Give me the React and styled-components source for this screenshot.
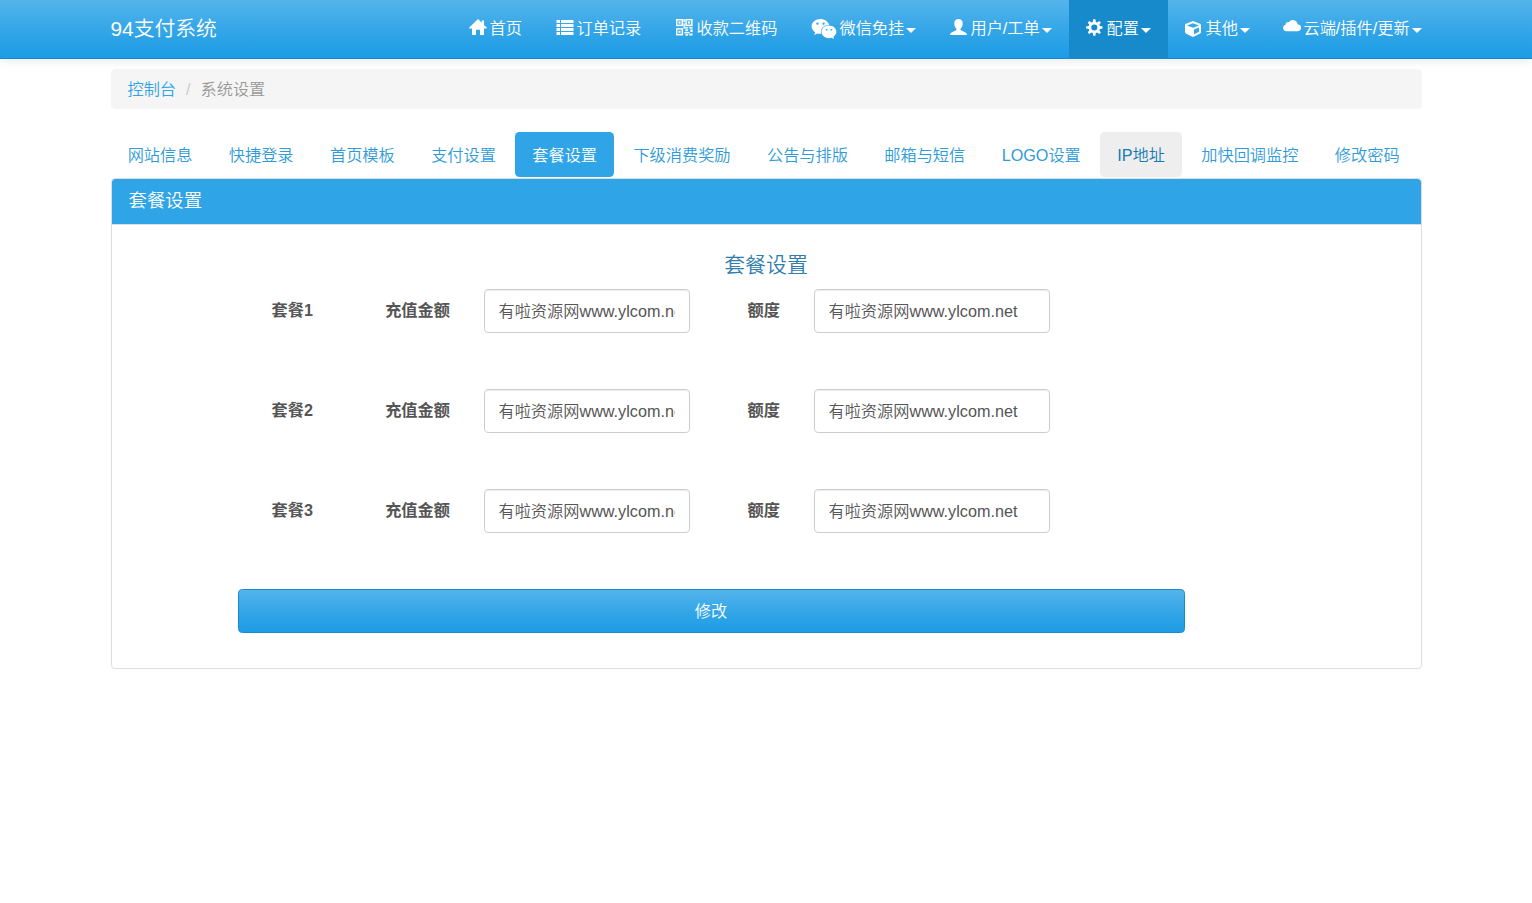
import React, { useState } from 'react';
import styled, { createGlobalStyle } from 'styled-components';
import { FaWeixin, FaCube } from 'react-icons/fa';

const GlobalStyle = createGlobalStyle`
  * {
    box-sizing: border-box;
  }

  body {
    margin: 0;
    background: #fff;
    color: #555;
    font-family: "Liberation Sans", "Noto Sans CJK SC", sans-serif;
    font-size: 16.2px;
    font-weight: 350;
    line-height: 23px;
  }
`;

const Container = styled.div`
  width: 1311px;
  margin: 0 auto;
`;

const Navbar = styled.nav`
  height: 59px;
  border-bottom: 1px solid #178acc;
  background-image: linear-gradient(#54b4eb, #2fa4e7 60%, #1d9ce5);
  box-shadow: 0 1px 10px rgba(0, 0, 0, 0.1);
`;

const NavbarInner = styled(Container)`
  display: flex;
  justify-content: space-between;
  height: 58px;
`;

const Brand = styled.a`
  padding-top: 17px;
  color: #fff;
  font-size: 20.8px;
  white-space: nowrap;
`;

const NavList = styled.ul`
  display: flex;
  margin: 0 -16px 0 0;
  padding: 0;
  list-style: none;
`;

const NavItem = styled.li`
  width: ${props => props.$width}px;
  height: 58px;
  padding: 16px 0 0 17px;
  background-color: ${props => (props.$active ? '#178acc' : 'transparent')};
`;

const NavLink = styled.a`
  display: flex;
  align-items: center;
  height: 24px;
  color: #fff;
  white-space: nowrap;
  cursor: pointer;

  svg {
    flex: none;
    margin-top: ${props => props.$shift}px;
    margin-right: ${props => props.$gap}px;
  }
`;

const Caret = styled.span`
  margin: 4px 0 0 2px;
  border-top: 5px solid #fff;
  border-left: 5px solid transparent;
  border-right: 5px solid transparent;
`;

const Breadcrumb = styled.ol`
  display: flex;
  height: 40px;
  margin: 10px 0 23px;
  padding: 9px 17px;
  border-radius: 4.6px;
  background-color: #f5f5f5;
  color: #999;
  list-style: none;

  a {
    color: #2fa4e7;
  }

  li + li::before {
    content: '/';
    padding: 0 10px;
    color: #ccc;
  }
`;

const Tabs = styled.ul`
  display: flex;
  gap: 2.1px;
  margin: 0;
  padding: 0;
  list-style: none;
`;

const Tab = styled.li`
  height: 45px;
  padding: 12px 17.17px 0;
  border-radius: 4.6px;
  background-color: ${props => (props.$active ? '#2fa4e7' : props.$hovered ? '#eee' : 'transparent')};
  color: ${props => (props.$active ? '#fff' : props.$hovered ? '#157ab5' : '#2f9bd8')};
  white-space: nowrap;
  cursor: pointer;
`;

const Panel = styled.section`
  height: 491px;
  margin-top: 1px;
  border: 1px solid #ddd;
  border-radius: 4.6px;
  box-shadow: 0 1px 1px rgba(0, 0, 0, 0.05);
`;

const PanelHeading = styled.header`
  height: 46px;
  padding: 10px 17px 0;
  border-bottom: 1px solid #ddd;
  border-radius: 3.6px 3.6px 0 0;
  background-color: #2fa4e7;
  color: #fff;
  font-size: 18.4px;
`;

const FormTitle = styled.h4`
  margin: 0;
  padding: 27px 0 12px;
  color: #317eac;
  font-size: 20.9px;
  font-weight: 350;
  line-height: 25px;
  text-align: center;
`;

const Form = styled.form`
  display: flex;
  flex-direction: column;
  gap: 56px;
  width: 947px;
  margin-left: 126px;
`;

const FormRow = styled.div`
  display: grid;
  grid-template-columns: 109px 137px 206px 124px 236px;
  height: 44px;
`;

const Label = styled.label`
  padding: 10px 33.6px 0 0;
  font-weight: 700;
  text-align: right;
  white-space: nowrap;
`;

const Input = styled.input`
  width: 100%;
  height: 44px;
  padding: 0 14px 2px;
  border: 1px solid #ccc;
  border-radius: 4.6px;
  outline: none;
  background: #fff;
  box-shadow: inset 0 1px 1px rgba(0, 0, 0, 0.075);
  color: #555;
  font: inherit;
`;

const SubmitButton = styled.button`
  height: 44px;
  border: 1px solid #178acc;
  border-radius: 4.6px;
  background-image: linear-gradient(#54b4eb, #2fa4e7 60%, #1d9ce5);
  color: #fff;
  font: inherit;
  cursor: pointer;
`;

const HomeIcon = () => (
  <svg width="18" height="17" viewBox="0 0 18 17" fill="#fff">
    <path d="M9 0 .3 8.6c-.4.5-.2.8.3.8H3v6.1c0 .3.2.5.5.5H7v-5.2h4V16h3.500c.3 0 .5-.2.500-.5V9.400h2.400c.5 0 .7-.3.3-.8L15 5.900V1.500h-2.300v2.200z" />
  </svg>
);

const ListIcon = () => (
  <svg width="18" height="17" viewBox="0 0 18 17" fill="#fff">
    <path d="M.5 1H4v3H.5zM5 1h12.500v3H5zM.5 5H4v3H.5zM5 5h12.500v3H5zM.5 9H4v3H.5zM5 9h12.500v3H5zM.5 13H4v3H.5zM5 13h12.500v3H5z" />
  </svg>
);

const QrIcon = () => (
  <svg width="17" height="17" viewBox="0 0 17 17" fill="#fff" stroke="#fff" strokeWidth="0.3">
    <path
      fillRule="evenodd"
      d="M0 0h7v7H0zM1.300 1.300v4.400h4.400V1.300zM2.600 2.600h1.800v1.800H2.600zM9.500 0h7v7h-7zM10.800 1.300v4.400h4.400V1.300zM12.100 2.600h1.800v1.800h-1.800zM0 9.300h7v7H0zM1.300 10.600V15h4.400v-4.400zM2.600 11.900h1.800v1.800H2.600zM7.600 0h1.200v3H7.600zM7.600 4.500h1.200v3.700h3v1.200H7.600zM9.500 10.600h2.400v1.300H9.500zM13.200 8.200h3.300v1.200h-3.300zM14.500 10.600h2v2.400h-2zM8.500 13h4.800v1.300H8.500zM9.500 15.200h2.500v1.200H9.500zM13.300 14.700h3.200v1.600h-3.200z"
    />
  </svg>
);

const UserIcon = () => (
  <svg width="17" height="17" viewBox="0 0 17 17" fill="#fff">
    <path d="M8.500 0c2.600 0 4.200 1.700 4.200 4.400 0 2.200-.9 4.300-2 5.300-.5.5-.4 1.300.3 1.600l4.400 2.300c1 .5 1.500 1.200 1.600 2.400H0c.1-1.200.6-1.900 1.600-2.400L6 11.300c.7-.3.8-1.100.3-1.600-1.100-1-2-3.100-2-5.300C4.300 1.700 5.900 0 8.500 0z" />
  </svg>
);

const CogIcon = () => (
  <svg width="17" height="17" viewBox="0 0 17 17">
    <circle cx="8.3" cy="8.5" r="4.400" fill="none" stroke="#fff" strokeWidth="2.700" />
    {[0, 45, 90, 135, 180, 225, 270, 315].map(angle => (
      <path key={angle} d="M6.600 3.900 7.200.3h2.200l.6 3.600z" fill="#fff" transform={`rotate(${angle} 8.3 8.5)`} />
    ))}
  </svg>
);

const CloudIcon = () => (
  <svg width="18" height="17" viewBox="0 0 18 17" fill="#fff">
    <path d="M3.500 13.200a3.300 3.300 0 0 1-.9-6.500A2.400 2.400 0 0 1 5.800 4.200 4.900 4.900 0 0 1 14.700 6.200a3.500 3.500 0 0 1-.2 7z" />
  </svg>
);

const navItems = [
  { label: '首页', icon: <HomeIcon />, width: 87, gap: 3, shift: -2 },
  { label: '订单记录', icon: <ListIcon />, width: 120, gap: 3, shift: -2 },
  { label: '收款二维码', icon: <QrIcon />, width: 135, gap: 4, shift: -2 },
  { label: '微信免挂', icon: <FaWeixin size={26} />, width: 139, gap: 3, shift: 2, caret: true },
  { label: '用户/工单', icon: <UserIcon />, width: 136, gap: 4, shift: -2, caret: true },
  { label: '配置', icon: <CogIcon />, width: 99, gap: 4, shift: -2, caret: true, active: true },
  { label: '其他', icon: <FaCube size={16} />, width: 98, gap: 5, shift: 1, caret: true },
  { label: '云端/插件/更新', icon: <CloudIcon />, width: 172, gap: 3, shift: -4, caret: true }
];

const tabs = [
  '网站信息',
  '快捷登录',
  '首页模板',
  '支付设置',
  '套餐设置',
  '下级消费奖励',
  '公告与排版',
  '邮箱与短信',
  'LOGO设置',
  'IP地址',
  '加快回调监控',
  '修改密码'
];

const packages = ['套餐1', '套餐2', '套餐3'];

function App() {
  const [activeTab, setActiveTab] = useState('套餐设置');
  const [hoveredTab, setHoveredTab] = useState('IP地址');

  return (
    <>
      <GlobalStyle />
      <Navbar>
        <NavbarInner>
          <Brand>94支付系统</Brand>
          <NavList>
            {navItems.map(item => (
              <NavItem key={item.label} $width={item.width} $active={item.active}>
                <NavLink $gap={item.gap} $shift={item.shift}>
                  {item.icon}
                  {item.label}
                  {item.caret && <Caret />}
                </NavLink>
              </NavItem>
            ))}
          </NavList>
        </NavbarInner>
      </Navbar>

      <Container>
        <Breadcrumb>
          <li><a>控制台</a></li>
          <li>系统设置</li>
        </Breadcrumb>

        <Tabs>
          {tabs.map(tab => (
            <Tab
              key={tab}
              $active={tab === activeTab}
              $hovered={tab === hoveredTab}
              onClick={() => setActiveTab(tab)}
              onMouseEnter={() => setHoveredTab(tab)}
            >
              {tab}
            </Tab>
          ))}
        </Tabs>

        <Panel>
          <PanelHeading>套餐设置</PanelHeading>
          <FormTitle>套餐设置</FormTitle>
          <Form onSubmit={(e) => e.preventDefault()}>
            {packages.map(name => (
              <FormRow key={name}>
                <Label>{name}</Label>
                <Label>充值金额</Label>
                <Input type="text" defaultValue="有啦资源网www.ylcom.net" />
                <Label>额度</Label>
                <Input type="text" defaultValue="有啦资源网www.ylcom.net" />
              </FormRow>
            ))}
            <SubmitButton type="submit">修改</SubmitButton>
          </Form>
        </Panel>
      </Container>
    </>
  );
}

export default App;
